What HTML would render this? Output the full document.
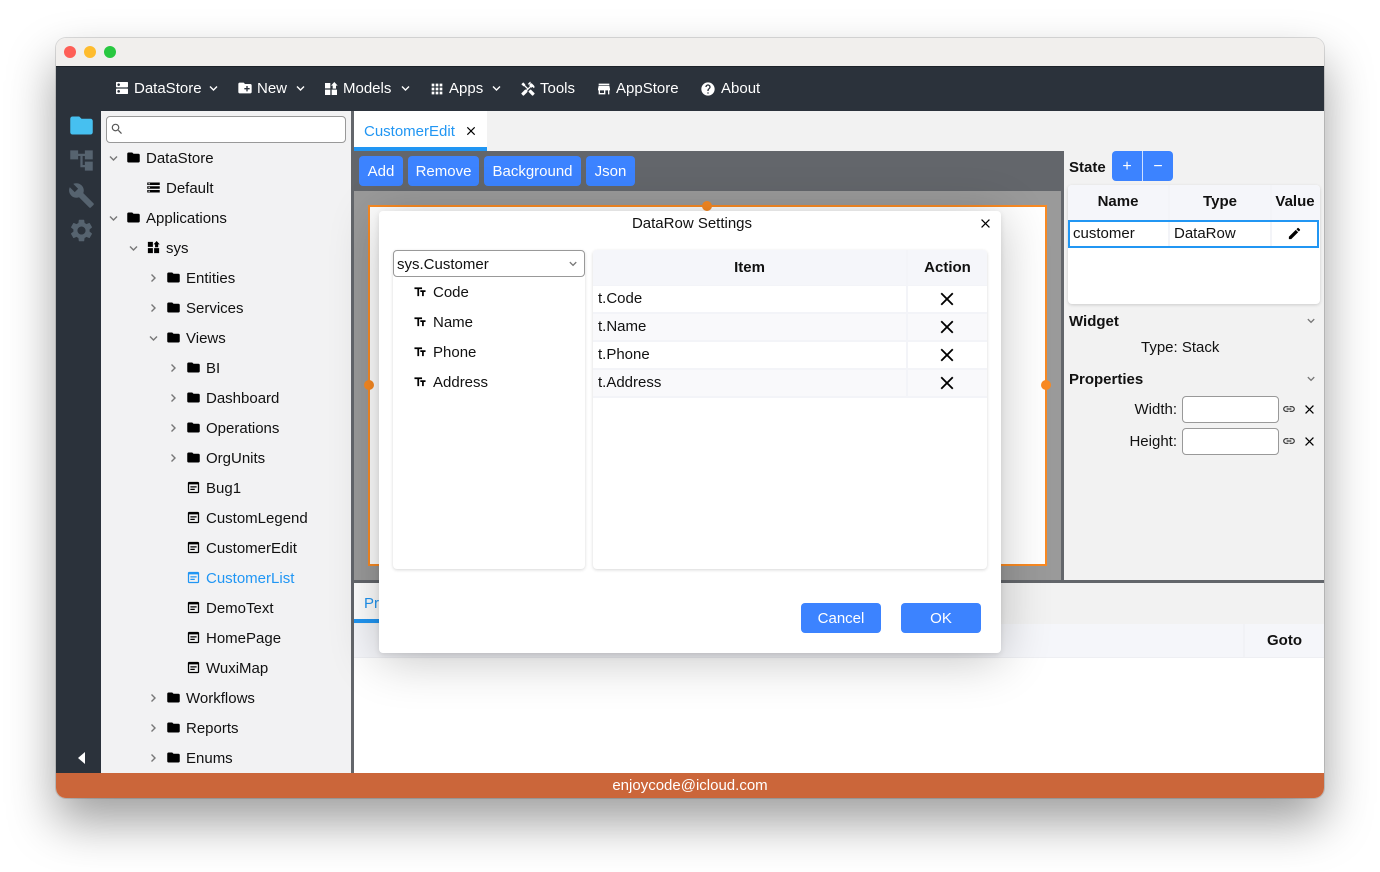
<!DOCTYPE html>
<html><head><meta charset="utf-8"><style>
*{box-sizing:border-box}
html,body{margin:0;padding:0;width:1380px;height:872px;background:#fff;overflow:hidden;font-family:"Liberation Sans",sans-serif;font-size:15px;color:#111}
.a{position:absolute}
.t{position:absolute;white-space:nowrap;line-height:20px;height:20px;margin-top:1px}
svg{position:absolute;display:block}
#win{position:absolute;left:56px;top:38px;width:1268px;height:760px;border-radius:10px;box-shadow:0 0 0 1px rgba(0,0,0,.13),0 24px 48px rgba(0,0,0,.38);}
.w{color:#fff}.b{font-weight:bold}
.btn{position:absolute;background:#3c83ff;color:#fff;border-radius:4px;text-align:center;line-height:31px;height:30px}
.inp{position:absolute;background:#fff;border:1px solid #999;border-radius:4px}
.card{position:absolute;background:#fff;border-radius:4px;box-shadow:0 1px 3px rgba(0,0,0,.16)}
</style></head><body>
<svg width="0" height="0" style="position:absolute"><defs>
<symbol id="folder" viewBox="0 0 24 24"><path d="M10 4H4c-1.1 0-2 .9-2 2v12c0 1.1.9 2 2 2h16c1.1 0 2-.9 2-2V8c0-1.1-.9-2-2-2h-8l-2-2z"/></symbol>
<symbol id="close" viewBox="0 0 24 24"><path d="M19 6.41L17.59 5 12 10.59 6.41 5 5 6.41 10.59 12 5 17.59 6.41 19 12 13.41 17.59 19 19 17.59 13.41 12z"/></symbol>
<symbol id="gear" viewBox="0 0 24 24"><path d="M19.14 12.94c.04-.3.06-.61.06-.94 0-.32-.02-.64-.07-.94l2.03-1.58c.18-.14.23-.41.12-.61l-1.92-3.32c-.12-.22-.37-.29-.59-.22l-2.39.96c-.5-.38-1.03-.7-1.62-.94l-.36-2.54c-.04-.24-.24-.41-.48-.41h-3.84c-.24 0-.43.17-.47.41l-.36 2.54c-.59.24-1.13.57-1.62.94l-2.39-.96c-.22-.08-.47 0-.59.22L2.74 8.87c-.12.21-.08.47.12.61l2.03 1.58c-.05.3-.09.63-.09.94s.02.64.07.94l-2.03 1.58c-.18.14-.23.41-.12.61l1.92 3.32c.12.22.37.29.59.22l2.39-.96c.5.38 1.03.7 1.62.94l.36 2.54c.05.24.24.41.48.41h3.84c.24 0 .44-.17.47-.41l.36-2.54c.59-.24 1.13-.56 1.62-.94l2.39.96c.22.08.47 0 .59-.22l1.92-3.32c.12-.22.07-.47-.12-.61l-2.01-1.58zM12 15.6c-1.98 0-3.6-1.62-3.6-3.6s1.62-3.6 3.6-3.6 3.6 1.62 3.6 3.6-1.62 3.6-3.6 3.6z"/></symbol>
<symbol id="wrench" viewBox="0 0 24 24"><path d="M22.7 19l-9.1-9.1c.9-2.3.4-5-1.5-6.9-2-2-5-2.4-7.4-1.3L9 6 6 9 1.6 4.7C.4 7.1.9 10.1 2.9 12.1c1.9 1.9 4.6 2.4 6.9 1.5l9.1 9.1c.4.4 1 .4 1.4 0l2.3-2.3c.5-.4.5-1.1.1-1.4z"/></symbol>
<symbol id="atree" viewBox="0 0 24 24"><path d="M22 11V3h-7v3H9V3H2v8h7V8h2v10h4v3h7v-8h-7v3h-2V8h2v3z"/></symbol>
<symbol id="widgets" viewBox="0 0 24 24"><path d="M13 13v8h8v-8h-8zM3 21h8v-8H3v8zM3 3v8h8V3H3zM17 1.500L12 7h2.500v4.500h5V7H22L17 1.500z"/></symbol>
<symbol id="dns" viewBox="0 0 24 24"><path d="M20 13H4c-.55 0-1 .45-1 1v6c0 .55.45 1 1 1h16c.55 0 1-.45 1-1v-6c0-.55-.45-1-1-1zM7 19c-1.100 0-2-.9-2-2s.9-2 2-2 2 .9 2 2-.9 2-2 2zM20 3H4c-.55 0-1 .45-1 1v6c0 .55.45 1 1 1h16c.55 0 1-.45 1-1V4c0-.55-.45-1-1-1zM7 9c-1.100 0-2-.9-2-2s.9-2 2-2 2 .9 2 2-.9 2-2 2z"/></symbol>
<symbol id="newf" viewBox="0 0 24 24"><path d="M20 6h-8l-2-2H4c-1.110 0-1.990.89-1.990 2L2 18c0 1.110.89 2 2 2h16c1.110 0 2-.89 2-2V8c0-1.110-.89-2-2-2zm-1 8h-3v3h-2v-3h-3v-2h3V9h2v3h3v2z"/></symbol>
<symbol id="apps" viewBox="0 0 24 24"><path d="M4 8h4V4H4v4zm6 12h4v-4h-4v4zm-6 0h4v-4H4v4zm0-6h4v-4H4v4zm6 0h4v-4h-4v4zm6-10v4h4V4h-4zm-6 4h4V4h-4v4zm6 6h4v-4h-4v4zm0 6h4v-4h-4v4z"/></symbol>
<symbol id="tools" viewBox="0 0 24 24"><path d="M21.670 18.170l-5.300-5.300h-.99l-2.540 2.540v.99l5.300 5.300c.39.39 1.020.39 1.410 0l2.120-2.120c.39-.38.39-1.020 0-1.410z"/><path d="M17.340 10.190l1.410-1.410 2.120 2.120c1.170-1.170 1.170-3.070 0-4.240l-3.540-3.540-1.410 1.410V1.710l-.7-.71-3.540 3.540.71.71h2.830l-1.410 1.410 1.060 1.060-2.890 2.890-4.130-4.130V5.060L4.830 2.040 2 4.870 5.030 7.900h1.410l4.130 4.130-.85.85H7.600l-5.300 5.300c-.39.39-.39 1.020 0 1.410l2.120 2.120c.39.39 1.020.39 1.410 0l5.300-5.300v-2.120l5.150-5.150 1.060 1.050z"/></symbol>
<symbol id="store" viewBox="0 0 24 24"><path d="M20 4H4v2h16V4zm1 10v-2l-1-5H4l-1 5v2h1v6h10v-6h4v6h2v-6h1zm-9 4H6v-4h6v4z"/></symbol>
<symbol id="help" viewBox="0 0 24 24"><path d="M12 2C6.480 2 2 6.480 2 12s4.480 10 10 10 10-4.480 10-10S17.520 2 12 2zm1 17h-2v-2h2v2zm2.070-7.750l-.9.92C13.450 12.900 13 13.500 13 15h-2v-.5c0-1.100.45-2.100 1.170-2.830l1.240-1.260c.37-.36.59-.86.59-1.410 0-1.100-.9-2-2-2s-2 .9-2 2H8c0-2.210 1.790-4 4-4s4 1.790 4 4c0 .88-.36 1.680-.93 2.250z"/></symbol>
<symbol id="search" viewBox="0 0 24 24"><path d="M15.500 14h-.79l-.28-.27C15.410 12.590 16 11.110 16 9.500 16 5.910 13.090 3 9.500 3S3 5.910 3 9.500 5.910 16 9.500 16c1.610 0 3.090-.59 4.230-1.570l.27.28v.79l5 4.990L20.490 19l-4.990-5zm-6 0C7.010 14 5 11.990 5 9.500S7.010 5 9.500 5 14 7.010 14 9.500 11.990 14 9.500 14z"/></symbol>
<symbol id="storage" viewBox="0 0 24 24"><path d="M2 20h20v-4H2v4zm2-3h2v2H4v-2zM2 4v4h20V4H2zm4 3H4V5h2v2zm-4 7h20v-4H2v4zm2-3h2v2H4v-2z"/></symbol>
<symbol id="form" viewBox="0 0 24 24"><path d="M19 3H5c-1.100 0-2 .9-2 2v14c0 1.100.9 2 2 2h14c1.100 0 2-.9 2-2V5c0-1.100-.9-2-2-2zm0 16H5V7h14v12z"/><path d="M7 10h10v2H7zM7 14h7v2H7z"/></symbol>
<symbol id="edit" viewBox="0 0 24 24"><path d="M3 17.250V21h3.750L17.810 9.940l-3.750-3.750L3 17.250zM20.710 7.040c.39-.39.39-1.020 0-1.410l-2.340-2.340c-.39-.39-1.020-.39-1.410 0l-1.830 1.830 3.750 3.750 1.830-1.830z"/></symbol>
<symbol id="link" viewBox="0 0 24 24"><path d="M3.900 12c0-1.710 1.390-3.100 3.100-3.100h4V7H7c-2.760 0-5 2.240-5 5s2.240 5 5 5h4v-1.900H7c-1.710 0-3.100-1.390-3.100-3.100zM8 13h8v-2H8v2zm9-6h-4v1.900h4c1.710 0 3.100 1.390 3.100 3.100s-1.390 3.100-3.100 3.100h-4V17h4c2.760 0 5-2.240 5-5s-2.240-5-5-5z"/></symbol>
<symbol id="tt" viewBox="0 0 24 24"><path d="M2.500 4v3h5v12h3V7h5V4h-13zm19 5h-9v3h3v7h3v-7h3V9z"/></symbol>
<symbol id="cd" viewBox="0 0 12 12"><path d="M2 4.500L5.500 8 9 4.500" fill="none" stroke="currentColor" stroke-width="1.400"/></symbol>
<symbol id="cr" viewBox="0 0 12 12"><path d="M3.500 2.500L7 6 3.500 9.500" fill="none" stroke="currentColor" stroke-width="1.400"/></symbol>
</defs></svg>

<div id="win"></div>
<!-- title -->
<div class="a" style="left:56px;top:38px;width:1268px;height:760px;border-radius:10px;overflow:hidden;background:#f2f2f2">
<div class="a" style="left:0;top:0;width:1268px;height:28px;background:#f1efed"></div>
<div class="a" style="left:8px;top:8px;width:12px;height:12px;border-radius:6px;background:#fe5f57"></div>
<div class="a" style="left:28px;top:8px;width:12px;height:12px;border-radius:6px;background:#febc2e"></div>
<div class="a" style="left:48px;top:8px;width:12px;height:12px;border-radius:6px;background:#28c840"></div>
<div class="a" style="left:0;top:28px;width:1268px;height:45px;background:#2b323b;border-top:1px solid #1c2229"></div>
<div class="a" style="left:0;top:73px;width:45px;height:662px;background:#2b323b"></div>
<div class="a" style="left:0;top:735px;width:1268px;height:25px;background:#cb663a"></div>
</div>

<!-- nav -->
<svg style="left:114px;top:80px;fill:#fff" width="16" height="16"><use href="#dns"/></svg><div class="t w" style="left:134px;top:78px">DataStore</div><svg style="left:208px;top:82px;color:#fff" width="12" height="12"><use href="#cd"/></svg>
<svg style="left:237px;top:80px;fill:#fff" width="16" height="16"><use href="#newf"/></svg><div class="t w" style="left:257px;top:78px">New</div><svg style="left:294.500px;top:82px;color:#fff" width="12" height="12"><use href="#cd"/></svg>
<svg style="left:323px;top:81px;fill:#fff" width="16" height="16"><use href="#widgets"/></svg><div class="t w" style="left:343px;top:78px">Models</div><svg style="left:400px;top:82px;color:#fff" width="12" height="12"><use href="#cd"/></svg>
<svg style="left:429px;top:81px;fill:#fff" width="16" height="16"><use href="#apps"/></svg><div class="t w" style="left:449px;top:78px">Apps</div><svg style="left:490.500px;top:82px;color:#fff" width="12" height="12"><use href="#cd"/></svg>
<svg style="left:520px;top:81px;fill:#fff" width="16" height="16"><use href="#tools"/></svg><div class="t w" style="left:540px;top:78px">Tools</div>
<svg style="left:596px;top:81px;fill:#fff" width="16" height="16"><use href="#store"/></svg><div class="t w" style="left:616px;top:78px">AppStore</div>
<svg style="left:700px;top:81px;fill:#fff" width="16" height="16"><use href="#help"/></svg><div class="t w" style="left:721px;top:78px">About</div>

<!-- sidebar -->
<svg style="left:68px;top:112px;fill:#46c0f0" width="27" height="27"><use href="#folder"/></svg>
<svg style="left:68px;top:147px;fill:#56636f" width="27" height="27"><use href="#atree"/></svg>
<svg style="left:68px;top:182px;fill:#56636f" width="27" height="27"><use href="#wrench"/></svg>
<svg style="left:68px;top:217px;fill:#56636f" width="27" height="27"><use href="#gear"/></svg>
<div class="a" style="left:78px;top:752px;width:0;height:0;border-top:6px solid transparent;border-bottom:6px solid transparent;border-right:7px solid #fff"></div>

<!-- tree -->
<div class="a" style="left:101px;top:111px;width:250px;height:662px;background:#f2f2f3"></div>
<div class="a" style="left:351px;top:111px;width:3px;height:662px;background:#63666b"></div>
<div class="inp" style="left:106px;top:116px;width:240px;height:27px"></div>
<svg style="left:110px;top:122px;fill:#555" width="14" height="14"><use href="#search"/></svg>

<svg style="left:108px;top:152px;color:#777" width="12" height="12"><use href="#cd"/></svg><svg style="left:126px;top:150px" width="15" height="15"><use href="#folder"/></svg><div class="t" style="left:146px;top:148px">DataStore</div>
<svg style="left:146px;top:180px" width="15" height="15"><use href="#storage"/></svg><div class="t" style="left:166px;top:178px">Default</div>
<svg style="left:108px;top:212px;color:#777" width="12" height="12"><use href="#cd"/></svg><svg style="left:126px;top:210px" width="15" height="15"><use href="#folder"/></svg><div class="t" style="left:146px;top:208px">Applications</div>
<svg style="left:128px;top:242px;color:#777" width="12" height="12"><use href="#cd"/></svg><svg style="left:146px;top:240px" width="15" height="15"><use href="#widgets"/></svg><div class="t" style="left:166px;top:238px">sys</div>
<svg style="left:148px;top:272px;color:#777" width="12" height="12"><use href="#cr"/></svg><svg style="left:166px;top:270px" width="15" height="15"><use href="#folder"/></svg><div class="t" style="left:186px;top:268px">Entities</div>
<svg style="left:148px;top:302px;color:#777" width="12" height="12"><use href="#cr"/></svg><svg style="left:166px;top:300px" width="15" height="15"><use href="#folder"/></svg><div class="t" style="left:186px;top:298px">Services</div>
<svg style="left:148px;top:332px;color:#777" width="12" height="12"><use href="#cd"/></svg><svg style="left:166px;top:330px" width="15" height="15"><use href="#folder"/></svg><div class="t" style="left:186px;top:328px">Views</div>
<svg style="left:168px;top:362px;color:#777" width="12" height="12"><use href="#cr"/></svg><svg style="left:186px;top:360px" width="15" height="15"><use href="#folder"/></svg><div class="t" style="left:206px;top:358px">BI</div>
<svg style="left:168px;top:392px;color:#777" width="12" height="12"><use href="#cr"/></svg><svg style="left:186px;top:390px" width="15" height="15"><use href="#folder"/></svg><div class="t" style="left:206px;top:388px">Dashboard</div>
<svg style="left:168px;top:422px;color:#777" width="12" height="12"><use href="#cr"/></svg><svg style="left:186px;top:420px" width="15" height="15"><use href="#folder"/></svg><div class="t" style="left:206px;top:418px">Operations</div>
<svg style="left:168px;top:452px;color:#777" width="12" height="12"><use href="#cr"/></svg><svg style="left:186px;top:450px" width="15" height="15"><use href="#folder"/></svg><div class="t" style="left:206px;top:448px">OrgUnits</div>
<svg style="left:186px;top:480px" width="15" height="15"><use href="#form"/></svg><div class="t" style="left:206px;top:478px">Bug1</div>
<svg style="left:186px;top:510px" width="15" height="15"><use href="#form"/></svg><div class="t" style="left:206px;top:508px">CustomLegend</div>
<svg style="left:186px;top:540px" width="15" height="15"><use href="#form"/></svg><div class="t" style="left:206px;top:538px">CustomerEdit</div>
<svg style="left:186px;top:570px;fill:#2196f3" width="15" height="15"><use href="#form"/></svg><div class="t" style="left:206px;top:568px;color:#2196f3">CustomerList</div>
<svg style="left:186px;top:600px" width="15" height="15"><use href="#form"/></svg><div class="t" style="left:206px;top:598px">DemoText</div>
<svg style="left:186px;top:630px" width="15" height="15"><use href="#form"/></svg><div class="t" style="left:206px;top:628px">HomePage</div>
<svg style="left:186px;top:660px" width="15" height="15"><use href="#form"/></svg><div class="t" style="left:206px;top:658px">WuxiMap</div>
<svg style="left:148px;top:692px;color:#777" width="12" height="12"><use href="#cr"/></svg><svg style="left:166px;top:690px" width="15" height="15"><use href="#folder"/></svg><div class="t" style="left:186px;top:688px">Workflows</div>
<svg style="left:148px;top:722px;color:#777" width="12" height="12"><use href="#cr"/></svg><svg style="left:166px;top:720px" width="15" height="15"><use href="#folder"/></svg><div class="t" style="left:186px;top:718px">Reports</div>
<svg style="left:148px;top:752px;color:#777" width="12" height="12"><use href="#cr"/></svg><svg style="left:166px;top:750px" width="15" height="15"><use href="#folder"/></svg><div class="t" style="left:186px;top:748px">Enums</div>

<!-- tabs -->
<div class="a" style="left:354px;top:111px;width:133px;height:40px;background:#fff;border-bottom:4px solid #2196f3"></div>
<div class="t" style="left:364px;top:121px;color:#2196f3">CustomerEdit</div>
<svg style="left:464px;top:124px" width="14" height="14"><use href="#close"/></svg>

<!-- designer -->
<div class="a" style="left:354px;top:151px;width:707px;height:40px;background:#63666b"></div>
<div class="a" style="left:354px;top:191px;width:707px;height:389px;background:#9a9a9a"></div>
<div class="a" style="left:1061px;top:151px;width:3px;height:429px;background:#63666b"></div>
<div class="btn" style="left:359px;top:156px;width:44px">Add</div>
<div class="btn" style="left:408px;top:156px;width:71px">Remove</div>
<div class="btn" style="left:484px;top:156px;width:97px">Background</div>
<div class="btn" style="left:586px;top:156px;width:49px">Json</div>
<div class="a" style="left:368px;top:205px;width:679px;height:361px;background:#fff;border:2px solid #f98a23"></div>
<div class="a" style="left:702px;top:201px;width:10px;height:10px;border-radius:5px;background:#f98a23"></div>
<div class="a" style="left:364px;top:380px;width:10px;height:10px;border-radius:5px;background:#f98a23"></div>
<div class="a" style="left:1041px;top:380px;width:10px;height:10px;border-radius:5px;background:#f98a23"></div>

<!-- right panel -->
<div class="t b" style="left:1069px;top:157px">State</div>
<div class="a" style="left:1112px;top:151px;width:61px;height:30px;background:#3c83ff;border-radius:4px"></div>
<div class="a" style="left:1142px;top:151px;width:1px;height:30px;background:#cfe0ff"></div>
<div class="t w" style="left:1112px;top:156px;width:30px;text-align:center;font-size:16px">+</div>
<div class="t w" style="left:1143px;top:156px;width:30px;text-align:center;font-size:16px">−</div>
<div class="card" style="left:1068px;top:185px;width:252px;height:119px"></div>
<div class="a" style="left:1068px;top:185px;width:252px;height:35px;background:#f5f6fa;border-radius:4px 4px 0 0"></div>
<div class="a" style="left:1168px;top:185px;width:2px;height:62px;background:#f3f4f8"></div>
<div class="a" style="left:1270px;top:185px;width:2px;height:62px;background:#f3f4f8"></div>
<div class="t b" style="left:1068px;top:191px;width:100px;text-align:center">Name</div>
<div class="t b" style="left:1170px;top:191px;width:100px;text-align:center">Type</div>
<div class="t b" style="left:1272px;top:191px;width:46px;text-align:center">Value</div>
<div class="a" style="left:1068px;top:220px;width:251px;height:28px;border:2px solid #2196f3"></div>
<div class="t" style="left:1073px;top:223px">customer</div>
<div class="t" style="left:1174px;top:223px">DataRow</div>
<svg style="left:1287px;top:226px" width="15" height="15"><use href="#edit"/></svg>
<div class="t b" style="left:1069px;top:311px">Widget</div>
<svg style="left:1306px;top:315px;color:#777" width="11" height="11"><use href="#cd"/></svg>
<div class="t" style="left:1141px;top:337px">Type: Stack</div>
<div class="t b" style="left:1069px;top:369px">Properties</div>
<svg style="left:1306px;top:373px;color:#777" width="11" height="11"><use href="#cd"/></svg>
<div class="t" style="left:1100px;top:399px;width:77px;text-align:right">Width:</div>
<div class="inp" style="left:1182px;top:396px;width:97px;height:27px"></div>
<svg style="left:1282px;top:402px" width="14" height="14" fill="#333"><use href="#link"/></svg>
<svg style="left:1301.500px;top:401.500px" width="15" height="15"><use href="#close"/></svg>
<div class="t" style="left:1100px;top:431px;width:77px;text-align:right">Height:</div>
<div class="inp" style="left:1182px;top:428px;width:97px;height:27px"></div>
<svg style="left:1282px;top:434px" width="14" height="14" fill="#333"><use href="#link"/></svg>
<svg style="left:1301.500px;top:433.500px" width="15" height="15"><use href="#close"/></svg>

<!-- bottom -->
<div class="a" style="left:354px;top:580px;width:970px;height:3px;background:#63666b"></div>
<div class="a" style="left:354px;top:583px;width:970px;height:190px;background:#fff"></div>
<div class="a" style="left:354px;top:583px;width:970px;height:41px;background:#f2f2f2"></div>
<div class="a" style="left:354px;top:583px;width:60px;height:40px;background:#fff;border-bottom:4px solid #2196f3"></div>
<div class="t" style="left:364px;top:593px;color:#2196f3">Pr</div>
<div class="a" style="left:354px;top:624px;width:970px;height:34px;background:#f5f6fa;border-bottom:1px solid #eeeff3"></div>
<div class="a" style="left:1243px;top:624px;width:2px;height:33px;background:#f1f2f6"></div>
<div class="t b" style="left:1245px;top:630px;width:79px;text-align:center">Goto</div>
<div class="t w" style="left:56px;top:775px;width:1268px;text-align:center">enjoycode@icloud.com</div>

<!-- modal -->
<div class="a" style="left:379px;top:211px;width:622px;height:442px;background:#fff;border-radius:4px;box-shadow:0 6px 50px rgba(0,0,0,.24),0 2px 6px rgba(0,0,0,.1)"></div>
<div class="t" style="left:379px;top:213px;width:626px;text-align:center">DataRow Settings</div>
<svg style="left:977.500px;top:215.500px" width="15" height="15"><use href="#close"/></svg>
<div class="card" style="left:393px;top:250px;width:192px;height:319px"></div>
<div class="inp" style="left:393px;top:250px;width:192px;height:27px"></div>
<div class="t" style="left:397px;top:254px">sys.Customer</div>
<svg style="left:568px;top:258px;color:#777" width="11" height="11"><use href="#cd"/></svg>
<svg style="left:413px;top:285px" width="14" height="14"><use href="#tt"/></svg><div class="t" style="left:433px;top:282px">Code</div>
<svg style="left:413px;top:315px" width="14" height="14"><use href="#tt"/></svg><div class="t" style="left:433px;top:312px">Name</div>
<svg style="left:413px;top:345px" width="14" height="14"><use href="#tt"/></svg><div class="t" style="left:433px;top:342px">Phone</div>
<svg style="left:413px;top:375px" width="14" height="14"><use href="#tt"/></svg><div class="t" style="left:433px;top:372px">Address</div>

<div class="card" style="left:593px;top:250px;width:394px;height:319px"></div>
<div class="a" style="left:593px;top:250px;width:394px;height:35px;background:#f5f6fa;border-radius:4px 4px 0 0"></div>
<div class="a" style="left:593px;top:313px;width:394px;height:28px;background:#f9f9fb"></div>
<div class="a" style="left:593px;top:369px;width:394px;height:28px;background:#f9f9fb"></div>
<div class="a" style="left:593px;top:285px;width:394px;height:1px;background:#f3f4f8"></div>
<div class="a" style="left:593px;top:312px;width:394px;height:2px;background:#f3f4f8"></div>
<div class="a" style="left:593px;top:340px;width:394px;height:2px;background:#f3f4f8"></div>
<div class="a" style="left:593px;top:368px;width:394px;height:2px;background:#f3f4f8"></div>
<div class="a" style="left:593px;top:396px;width:394px;height:2px;background:#f3f4f8"></div>
<div class="a" style="left:906px;top:250px;width:2px;height:147px;background:#f3f4f8"></div>
<div class="t b" style="left:593px;top:257px;width:313px;text-align:center">Item</div>
<div class="t b" style="left:908px;top:257px;width:79px;text-align:center">Action</div>
<div class="t" style="left:598px;top:288px">t.Code</div>
<div class="t" style="left:598px;top:316px">t.Name</div>
<div class="t" style="left:598px;top:344px">t.Phone</div>
<div class="t" style="left:598px;top:372px">t.Address</div>
<svg style="left:936px;top:288px" width="22" height="22"><use href="#close"/></svg>
<svg style="left:936px;top:316px" width="22" height="22"><use href="#close"/></svg>
<svg style="left:936px;top:344px" width="22" height="22"><use href="#close"/></svg>
<svg style="left:936px;top:372px" width="22" height="22"><use href="#close"/></svg>
<div class="btn" style="left:801px;top:603px;width:80px">Cancel</div>
<div class="btn" style="left:901px;top:603px;width:80px">OK</div>
</body></html>
